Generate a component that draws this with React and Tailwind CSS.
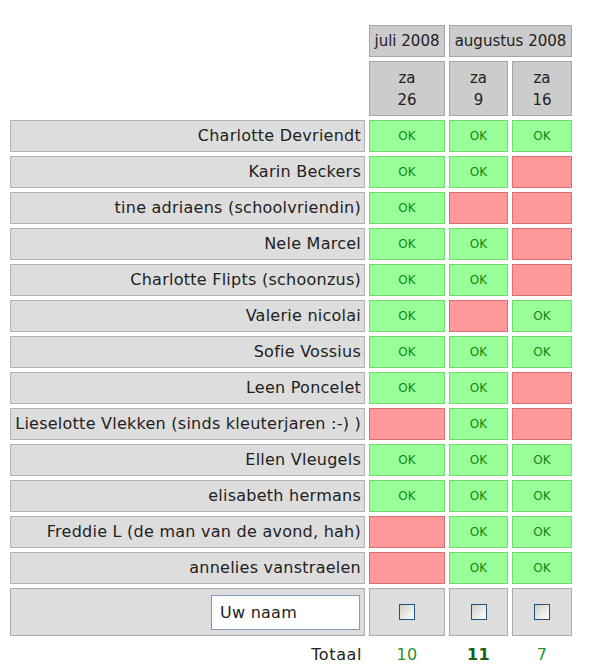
import React from 'react';

// rows: naam + antwoord per datum (true = OK, false = nee)
const ROWS = [
  ['Charlotte Devriendt', [true, true, true]],
  ['Karin Beckers', [true, true, false]],
  ['tine adriaens (schoolvriendin)', [true, false, false]],
  ['Nele Marcel', [true, true, false]],
  ['Charlotte Flipts (schoonzus)', [true, true, false]],
  ['Valerie nicolai', [true, false, true]],
  ['Sofie Vossius', [true, true, true]],
  ['Leen Poncelet', [true, true, false]],
  ['Lieselotte Vlekken (sinds kleuterjaren :-) )', [false, true, false]],
  ['Ellen Vleugels', [true, true, true]],
  ['elisabeth hermans', [true, true, true]],
  ['Freddie L (de man van de avond, hah)', [false, true, true]],
  ['annelies vanstraelen', [false, true, true]],
];

const DAYS = [
  ['za', '26'],
  ['za', '9'],
  ['za', '16'],
];

function Vote({ ok }) {
  return ok ? (
    <div className="flex h-[32px] items-center justify-center border border-[#6fd86f] bg-[#99ff99] text-[12px] tracking-normal text-[#118811]">
      OK
    </div>
  ) : (
    <div className="h-[32px] border border-[#d97070] bg-[#ff9999]" />
  );
}

function Box() {
  return (
    <div className="flex h-[48px] items-center justify-center border border-[#adadad] bg-[#dddddd]">
      <span className="block h-[16px] w-[16px] border-[1.5px] border-[#1c5180] bg-gradient-to-br from-[#d0d0c8] to-[#ffffff]" />
    </div>
  );
}

export default function App() {
  const totals = [0, 1, 2].map((i) => ROWS.filter((r) => r[1][i]).length);
  const max = Math.max(...totals);

  return (
    <div
      className="min-h-[672px] bg-white pl-[10px] pt-[25px] text-[16px] tracking-[0.25px] text-[#222]"
      style={{ fontFamily: '"DejaVu Sans", Verdana, sans-serif' }}
    >
      <div className="grid grid-cols-[355px_76px_59px_60px] gap-[4px]">
        {/* maanden */}
        <div />
        <div className="flex h-[32px] items-center justify-center whitespace-nowrap border border-[#a5a5a5] bg-[#cccccc] text-[15px] tracking-normal">
          juli 2008
        </div>
        <div className="col-span-2 flex h-[32px] items-center justify-center whitespace-nowrap border border-[#a5a5a5] bg-[#cccccc] text-[15px] tracking-normal">
          augustus 2008
        </div>

        {/* dagen */}
        <div />
        {DAYS.map(([d, n]) => (
          <div
            key={n}
            className="flex h-[55px] flex-col items-center justify-center border border-[#a5a5a5] bg-[#cccccc] text-[15px] leading-[22px] tracking-normal"
          >
            <span>{d}</span>
            <span>{n}</span>
          </div>
        ))}

        {ROWS.map(([name, votes]) => (
          <React.Fragment key={name}>
            <div className="flex h-[32px] items-center justify-end whitespace-nowrap border border-[#b3b3b3] bg-[#dddddd] pr-[3px]">
              {name}
            </div>
            {votes.map((v, i) => (
              <Vote key={i} ok={v} />
            ))}
          </React.Fragment>
        ))}

        {/* nieuwe deelnemer */}
        <div className="flex h-[48px] items-center justify-end border border-[#adadad] bg-[#dddddd] pr-[4px]">
          <input
            type="text"
            defaultValue="Uw naam"
            className="h-[35px] w-[149px] border border-[#7f9db9] bg-white pl-[8px] text-[16px] text-[#222] outline-none"
          />
        </div>
        <Box />
        <Box />
        <Box />

        {/* totaal */}
        <div className="flex h-[30px] items-center justify-end pr-[3px] tracking-[0.6px]">Totaal</div>
        {totals.map((t, i) => (
          <div
            key={i}
            className={
              t === max
                ? 'flex h-[30px] items-center justify-center font-bold text-[#116611]'
                : 'flex h-[30px] items-center justify-center text-[#2f8f2f]'
            }
          >
            {t}
          </div>
        ))}
      </div>
    </div>
  );
}
